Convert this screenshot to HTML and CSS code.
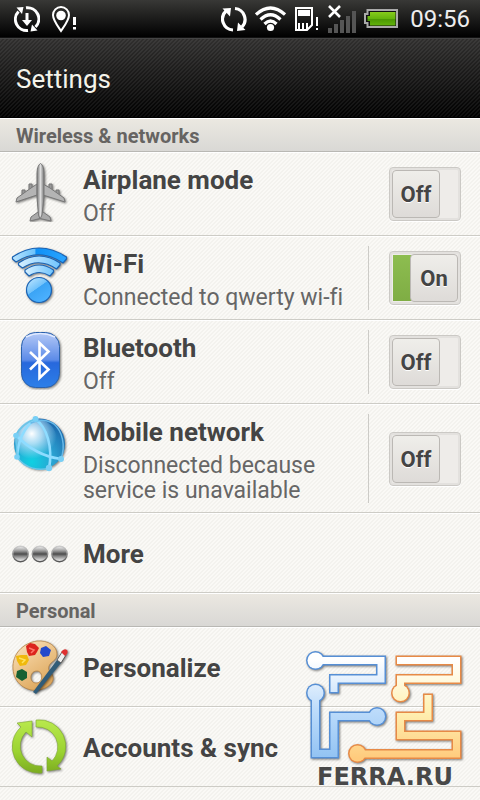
FILE: index.html
```
<!DOCTYPE html>
<html lang="en">
<head>
    <meta charset="UTF-8">
    <meta name="viewport" content="width=device-width, initial-scale=1.0">
    <link rel="stylesheet" href="styles.css">
    <title>Settings</title>
</head>
<body>
    <div class="statusbar">
        <!-- Notifications -->
        <svg width="26" height="28" viewBox="14 5 26 28" fill="none" stroke="#fff" stroke-width="3">
            <path d="M28 30.500A11.300 11.300 0 0 1 18.500 11.500M26 7.800A11.300 11.300 0 0 1 35.500 27"/>
            <path d="M16.500 7.500L23.500 7L22 14ZM37.500 30.500L30.500 31.500L32 24.500Z" fill="#fff" stroke="none"/>
            <path d="M27 13V21"/>
            <path d="M22 20H32L27 26Z" fill="#fff" stroke="none"/>
        </svg>
        <svg class="pin" width="26" height="28" viewBox="51 5 26 28">
            <path d="M61 31C57 25 53 20 53 15A8 8 0 0 1 69 15C69 20 65 25 61 31Z" fill="none" stroke="#fff" stroke-width="2"/>
            <circle cx="61" cy="15.500" r="4.800" fill="#fff"/>
            <path d="M73 17H76V25H73ZM73 27H76V29.500H73Z" fill="#fff"/>
        </svg>

        <div class="system">
            <svg width="26" height="28" viewBox="221 6 26 28" fill="none" stroke="#fff" stroke-width="3.200">
                <path d="M233 31A11 11 0 0 1 226 12M235 9.500A11 11 0 0 1 242 28"/>
                <path d="M222.500 9.500L231 9L230 17.500ZM245.500 31L237 32L238 23.500Z" fill="#fff" stroke="none"/>
            </svg>
            <svg width="31" height="28" viewBox="255 6 31 28" fill="none" stroke="#fff" stroke-width="3.200">
                <path d="M256 15.500Q270.500 2.500 285 15.500M260.500 20.500Q270.500 11 280.500 20.500M264.500 25Q270.500 19 276.500 25"/>
                <circle cx="270.500" cy="28.500" r="3.600" fill="#fff" stroke="none"/>
            </svg>
            <svg width="26" height="28" viewBox="294 6 26 28">
                <path d="M296 9H312V26L307 31H296Z" fill="none" stroke="#fff" stroke-width="2"/>
                <path d="M298 11H310V17H298ZM298 24H300V30H298ZM302 24H304V30H302ZM306 24H308V30H306ZM316 18H318V27H316ZM316 29H318V31H316Z" fill="#fff"/>
            </svg>
            <svg width="28" height="30" viewBox="328 4 28 30">
                <path d="M328 28H332V33H328ZM334 24H338V33H334ZM340 20H344V33H340ZM346 16H350V33H346ZM352 11H356V33H352Z" fill="#555"/>
                <path d="M329 6L340 17M340 6L329 17" stroke="#fff" stroke-width="2.600"/>
            </svg>
            <svg width="34" height="28" viewBox="364 6 34 28">
                <defs>
                    <linearGradient id="charge" x2="0" y2="1">
                        <stop offset="0" stop-color="#86cc1c"/>
                        <stop offset=".5" stop-color="#64b40c"/>
                        <stop offset=".52" stop-color="#4b9803"/>
                        <stop offset="1" stop-color="#62b30c"/>
                    </linearGradient>
                </defs>
                <path d="M367.500 11H397V28H367.500V24H365V15H367.500Z" fill="#111" stroke="#aaa" stroke-width="2"/>
                <path d="M370 13H395.500V26.500H370V22H367.500V17H370Z" fill="url(#charge)"/>
            </svg>
            <time>09:56</time>
        </div>
    </div>

    <header>
        <h1>Settings</h1>
    </header>

    <main>
        <h2>Wireless &amp; networks</h2>
        <ul>
            <li class="row">
                <svg class="icon" viewBox="10 162 60 60">
                    <defs>
                        <linearGradient id="metal" x2="1" y2="0">
                            <stop offset="0" stop-color="#777"/>
                            <stop offset=".5" stop-color="#ddd"/>
                            <stop offset="1" stop-color="#777"/>
                        </linearGradient>
                    </defs>
                    <g class="lift" stroke="#777" stroke-width="1">
                        <path d="M22 190H25V196H22ZM29 184H32V191H29ZM49 184H52V191H49ZM56 190H59V196H56Z" fill="#999"/>
                        <path d="M37 184L31 188L17 198L16 202L37 195ZM43 184L50 188L64 198L65 202L43 195Z" fill="#b4b4b4"/>
                        <path d="M38 212L31 217L30 221L40 218.500L51 221L50 217L43 212Z" fill="#aaa"/>
                        <path d="M40.500 163.500C38 165 37 169 37 175V197L38.500 215L40 219L42 215L44 197V175C44 169 43 165 40.500 163.500Z" fill="url(#metal)"/>
                    </g>
                </svg>
                <div class="text">
                    <h3 id="airplane">Airplane mode</h3>
                    <p>Off</p>
                </div>
                <label class="switch plain">
                    <input type="checkbox" aria-labelledby="airplane">
                    <span>Off</span>
                </label>
            </li>
            <li class="row">
                <svg class="icon" viewBox="10 246 60 60">
                    <defs>
                        <linearGradient id="wave" x2="1" y2="0">
                            <stop offset="0" stop-color="#b9e4ff"/>
                            <stop offset=".42" stop-color="#6cc2fb"/>
                            <stop offset=".43" stop-color="#0e90f6"/>
                            <stop offset="1" stop-color="#2ba5ff"/>
                        </linearGradient>
                        <linearGradient id="wave2" x2="1" y2="0">
                            <stop offset="0" stop-color="#d5efff"/>
                            <stop offset="1" stop-color="#72c5fd"/>
                        </linearGradient>
                        <linearGradient id="ball" x2=".7" y2="1">
                            <stop offset="0" stop-color="#c8eaff"/>
                            <stop offset=".48" stop-color="#71c2fb"/>
                            <stop offset=".5" stop-color="#3ba4f5"/>
                            <stop offset="1" stop-color="#4db2ff"/>
                        </linearGradient>
                    </defs>
                    <g class="lift" stroke="#1a63b4" stroke-width="1.200" stroke-linejoin="round">
                        <path d="M12.500 257Q39 239 66.500 257V259L63 263Q39 247 16 262L12.500 259Z" fill="url(#wave)"/>
                        <path d="M18.500 263Q39 249 60 263V265L56.500 269Q39 257 22.500 268L18.500 265Z" fill="url(#wave2)"/>
                        <path d="M25 270Q39 260 53.500 270V272L50 276Q39 269 29 276L25 272Z" fill="url(#wave2)"/>
                        <circle cx="39" cy="290" r="12.500" fill="url(#ball)"/>
                    </g>
                </svg>
                <div class="text">
                    <h3 id="wifi">Wi-Fi</h3>
                    <p>Connected to qwerty wi-fi</p>
                </div>
                <label class="switch">
                    <input type="checkbox" aria-labelledby="wifi" checked>
                    <span>On</span>
                </label>
            </li>
            <li class="row">
                <svg class="icon" viewBox="10 330 60 60">
                    <defs>
                        <linearGradient id="bt" x2="0" y2="1">
                            <stop offset="0" stop-color="#b4c9f6"/>
                            <stop offset=".5" stop-color="#5c8be8"/>
                            <stop offset=".55" stop-color="#2768dc"/>
                            <stop offset="1" stop-color="#2c7fe8"/>
                        </linearGradient>
                    </defs>
                    <rect class="lift" x="21.500" y="332.500" width="38" height="55" rx="14" fill="url(#bt)" stroke="#2a62ae"/>
                    <path d="M26 337Q40 330 55 337" fill="none" stroke="#e2ebff" stroke-width="1.500"/>
                    <path d="M30 352L48.500 369.500L39.500 378V343L48.500 351.500L30 369.500" fill="none" stroke="#fff" stroke-width="2.600"/>
                </svg>
                <div class="text">
                    <h3 id="bluetooth">Bluetooth</h3>
                    <p>Off</p>
                </div>
                <label class="switch">
                    <input type="checkbox" aria-labelledby="bluetooth">
                    <span>Off</span>
                </label>
            </li>
            <li class="row">
                <svg class="icon" viewBox="10 414 60 60">
                    <defs>
                        <radialGradient id="globe" cx=".35" cy=".85" r=".9">
                            <stop offset="0" stop-color="#10d0e2"/>
                            <stop offset=".5" stop-color="#2ba0d0"/>
                            <stop offset="1" stop-color="#1a62a8"/>
                        </radialGradient>
                        <radialGradient id="shine" cx=".4" cy=".35" r=".6">
                            <stop offset="0" stop-color="#fff"/>
                            <stop offset=".4" stop-color="#d6efff" stop-opacity=".75"/>
                            <stop offset="1" stop-color="#bde6ff" stop-opacity="0"/>
                        </radialGradient>
                    </defs>
                    <circle class="lift" cx="39.500" cy="444" r="25.500" fill="url(#globe)"/>
                    <circle cx="36" cy="440" r="21" fill="url(#shine)"/>
                    <g fill="none" stroke="#8edcff" stroke-width="2.600" stroke-linecap="round">
                        <path d="M35 419C47 427 53 447 49 469M16 435C29 449 45 457 61 459M35 419C25 427 18 440 17 457"/>
                        <path d="M31 423Q43 417 54 424C62 431 66 445 61 459" stroke-width="1.500" stroke="#68b9e8"/>
                        <path d="M16 435C19 429 25 423 35 419M17 457L16 435M17 457C25 469 40 471 49 468" stroke-width="1.500" stroke="#68c6e8"/>
                    </g>
                    <g fill="#78cff5">
                        <circle cx="35.500" cy="419" r="3"/>
                        <circle cx="16" cy="435.500" r="2.800"/>
                        <circle cx="17" cy="457" r="2.800"/>
                        <circle cx="49" cy="468" r="3.200"/>
                        <circle cx="61" cy="459" r="3"/>
                    </g>
                </svg>
                <div class="text">
                    <h3 id="mobile">Mobile network</h3>
                    <p>Disconnected because service is unavailable</p>
                </div>
                <label class="switch">
                    <input type="checkbox" aria-labelledby="mobile">
                    <span>Off</span>
                </label>
            </li>
            <li class="row single">
                <svg class="icon" viewBox="10 524 60 60">
                    <defs>
                        <linearGradient id="bead" x2="0" y2="1">
                            <stop offset="0" stop-color="#f4f4f4"/>
                            <stop offset=".3" stop-color="#999"/>
                            <stop offset=".5" stop-color="#4c4c4c"/>
                            <stop offset=".65" stop-color="#888"/>
                            <stop offset="1" stop-color="#fff"/>
                        </linearGradient>
                        <linearGradient id="rim" x2="0" y2="1">
                            <stop offset="0" stop-color="#ccc"/>
                            <stop offset="1" stop-color="#555"/>
                        </linearGradient>
                    </defs>
                    <g fill="url(#bead)" stroke="url(#rim)" stroke-width="1.400">
                        <circle cx="20.500" cy="555" r="7.700"/>
                        <circle cx="40" cy="555" r="7.700"/>
                        <circle cx="59.500" cy="555" r="7.700"/>
                    </g>
                </svg>
                <h3>More</h3>
            </li>
        </ul>

        <h2>Personal</h2>
        <ul>
            <li class="row single">
                <svg class="icon" viewBox="10 637 60 60">
                    <defs>
                        <linearGradient id="wood" x2=".6" y2="1">
                            <stop offset="0" stop-color="#fae7c9"/>
                            <stop offset=".5" stop-color="#edc58b"/>
                            <stop offset="1" stop-color="#dda75c"/>
                        </linearGradient>
                    </defs>
                    <path class="lift" d="M37 641C23 643 12 654 13 669C14 684 27 692 39 690C48 688 54 683 53 677C52 672 47 671 49 666C51 661 57 661 57 654C57 646 48 640 37 641ZM37 671C43 671 44 683 36 683C29 683 29 671 37 671Z" fill="url(#wood)" fill-rule="evenodd" stroke="#b88445" stroke-width=".8"/>
                    <path d="M26 646L30 643L35 644L39 648L37 652L35 655L29 656L27 652Z" fill="#dc251d"/>
                    <path d="M29 648L34 650L31 653" fill="none" stroke="#ff776b" stroke-width="1.500"/>
                    <path d="M41 648L46 646L51 650L49 656L43 657L40 653Z" fill="#2449cb"/>
                    <path d="M16 656L21 655L27 655L29 660L26 665L20 666L17 661Z" fill="#f0b90c"/>
                    <path d="M19 658L25 660L22 663" fill="none" stroke="#ffe25c" stroke-width="1.500"/>
                    <path d="M17 671L22 669L27 672L27 678L22 681L16 677Z" fill="#176132"/>
                    <g class="lift">
                        <path d="M57 660L33 692L36 694L61 663Z" fill="#315c78"/>
                        <path d="M57 660L62 652L66 655L61 663Z" fill="#eee" stroke="#444" stroke-width=".8"/>
                        <path d="M61 652Q64 648 67 650Q69 653 65 656Z" fill="#df3030"/>
                    </g>
                </svg>
                <h3>Personalize</h3>
            </li>
            <li class="row single">
                <svg class="icon" viewBox="10 717 60 60">
                    <defs>
                        <linearGradient id="leaf" gradientUnits="userSpaceOnUse" x1="0" y1="720" x2="0" y2="773">
                            <stop offset="0" stop-color="#b9e94d"/>
                            <stop offset=".6" stop-color="#9bd331"/>
                            <stop offset="1" stop-color="#7cac20"/>
                        </linearGradient>
                    </defs>
                    <g class="lift" fill="url(#leaf)" stroke="#7da832" stroke-width=".6">
                        <path d="M42 773V766A20 20 0 0 1 26 732L32 737V721L17 723L21 727A26.500 26.500 0 0 0 42 773Z"/>
                        <path d="M36 720V727A20 20 0 0 1 52 761L47 757V771L61 769L57 766A26.500 26.500 0 0 0 36 720Z"/>
                    </g>
                </svg>
                <h3>Accounts &amp; sync</h3>
            </li>
        </ul>
    </main>

    <!-- Site watermark over the list -->
    <svg class="watermark" width="170" height="145" viewBox="300 645 170 145" role="img" aria-label="FERRA.RU">
        <defs>
            <linearGradient id="blue" gradientUnits="userSpaceOnUse" x1="0" y1="660" x2="0" y2="758">
                <stop offset="0" stop-color="#fff"/>
                <stop offset=".5" stop-color="#bedcfb"/>
                <stop offset="1" stop-color="#92c3f3"/>
            </linearGradient>
            <linearGradient id="orange" gradientUnits="userSpaceOnUse" x1="0" y1="660" x2="0" y2="758">
                <stop offset="0" stop-color="#fff"/>
                <stop offset=".5" stop-color="#fff2b5"/>
                <stop offset="1" stop-color="#ffcb7d"/>
            </linearGradient>
        </defs>
        <g class="lift" fill="none">
            <g stroke="#568fd5" stroke-width="10">
                <path d="M316 660.500H381V679H334V693.500M315.500 693V753.500H334V716.500H377"/>
                <g fill="#568fd5" stroke="none">
                    <circle cx="315.500" cy="660.500" r="9.500"/>
                    <circle cx="315.500" cy="693" r="9.500"/>
                    <circle cx="377" cy="716.500" r="9.500"/>
                </g>
            </g>
            <g stroke="#e78a46" stroke-width="10">
                <path d="M395.500 660.500H456.500V679H400.500V693M428 693.500V716.500H400.500V735.500H456.500V754H357"/>
                <g fill="#e78a46" stroke="none">
                    <circle cx="400.500" cy="693" r="9.500"/>
                    <circle cx="357.500" cy="753.500" r="9.500"/>
                </g>
            </g>
        </g>
        <g fill="none" stroke="url(#blue)" stroke-width="7">
            <path d="M316 660.500H381V679H334V692M315.500 693V753.500H334V716.500H377"/>
            <g fill="url(#blue)" stroke="none">
                <circle cx="315.500" cy="660.500" r="8"/>
                <circle cx="315.500" cy="693" r="8"/>
                <circle cx="377" cy="716.500" r="8"/>
            </g>
        </g>
        <g fill="none" stroke="url(#orange)" stroke-width="7">
            <path d="M397 660.500H456.500V679H400.500V693M428 695V716.500H400.500V735.500H456.500V754H357"/>
            <g fill="url(#orange)" stroke="none">
                <circle cx="400.500" cy="693" r="8"/>
                <circle cx="357.500" cy="753.500" r="8"/>
            </g>
        </g>
        <text x="385" y="785" text-anchor="middle">FERRA.RU</text>
    </svg>
</body>
</html>
```
FILE: styles.css
```
/* Global Styles */
* {
    box-sizing: border-box;
}

body {
    font-family: Roboto, "Liberation Sans", sans-serif;
    font-variant-ligatures: none;
    position: relative;
    margin: 0;
    min-height: 100vh;
    color: #444;
    background: linear-gradient(135deg, #f3f2ee 25%, #faf9f6 25%, #faf9f6 50%, #f3f2ee 50%, #f3f2ee 75%, #faf9f6 75%) 0 0 / 4px 4px;
}

h1,
h2,
h3,
p,
ul {
    margin: 0;
    padding: 0;
}

/* Status bar */
.statusbar {
    display: flex;
    align-items: center;
    height: 38px;
    padding: 0 10px 0 14px;
    background: linear-gradient(#383836, #000);
    border-bottom: 1px solid #111;
}

.pin {
    margin-left: 11px;
}

.system {
    display: flex;
    align-items: center;
    gap: 8px;
    margin-left: auto;
}

.system time {
    margin-left: 4px;
    font-size: 24px;
    line-height: 28px;
    color: #eee;
}

/* Header */
header {
    display: flex;
    align-items: center;
    height: 80px;
    padding: 2px 16px 0;
    border-top: 1px solid #444;
    border-bottom: 1px solid #000;
    background:
        linear-gradient(135deg, rgba(255, 255, 255, 0.06) 25%, transparent 25%, transparent 50%, rgba(255, 255, 255, 0.06) 50%, rgba(255, 255, 255, 0.06) 75%, transparent 75%) 0 0 / 4px 4px,
        linear-gradient(#302f2e, #000);
}

h1 {
    font-size: 26px;
    font-weight: 400;
    line-height: 32px;
    color: #f4f3ea;
}

/* List */
h2 {
    height: 34px;
    padding: 2px 16px 0;
    font-size: 20px;
    font-weight: 700;
    line-height: 30px;
    color: #666462;
    background: linear-gradient(#ebe8e1, #d9d8d5);
    border-top: 1px solid #fff;
    border-bottom: 1px solid #b9b8b4;
}

ul {
    list-style: none;
}

.row {
    display: flex;
    align-items: flex-start;
    padding: 9px 19px 9px 10px;
    border-top: 1px solid #fff;
    border-bottom: 1px solid #cdccc6;
}

.single {
    align-items: center;
}

.single h3 {
    padding-top: 2px;
}

.icon {
    flex: none;
    width: 60px;
    height: 60px;
    margin-right: 13px;
}

.lift {
    filter: drop-shadow(1px 1px 1px rgba(0, 0, 0, 0.5));
}

.text {
    flex: 1;
    padding-top: 3px;
}

h3 {
    font-size: 26px;
    font-weight: 700;
    line-height: 30px;
}

.text p {
    margin-top: 6px;
    font-size: 23px;
    line-height: 25px;
    color: #666;
}

/* Switches */
.switch {
    display: grid;
    flex: none;
    align-self: stretch;
    align-items: center;
    padding-left: 20px;
    border-left: 1px solid #cccbc7;
}

.plain {
    border-color: transparent;
}

.switch input,
.switch span {
    grid-area: 1 / 1;
    margin: 0;
}

.switch input {
    appearance: none;
    width: 72px;
    height: 54px;
    border: 1px solid #cbc9c5;
    border-radius: 4px;
    background: #eeece9;
    box-shadow: inset 0 0 0 2px #e3e1de, 0 1px 0 #fff;
}

.switch input:checked {
    background: linear-gradient(#8dbd50, #7fad44) 3px 3px / 30px 46px no-repeat, #eeece9;
}

.switch span {
    width: 48px;
    height: 48px;
    margin-left: 3px;
    border: 1px solid #bbb8b4;
    border-radius: 4px;
    background: linear-gradient(#efeeea, #dedbd8);
    font-size: 22px;
    font-weight: 700;
    line-height: 48px;
    text-align: center;
    text-shadow: 0 1px 0 #fff;
}

.switch input:checked + span {
    margin-left: 21px;
}

/* Watermark */
.watermark {
    position: absolute;
    right: 10px;
    top: 645px;
}

.watermark text {
    font: bold 24px "DejaVu Sans", sans-serif;
    fill: #484848;
}
```
